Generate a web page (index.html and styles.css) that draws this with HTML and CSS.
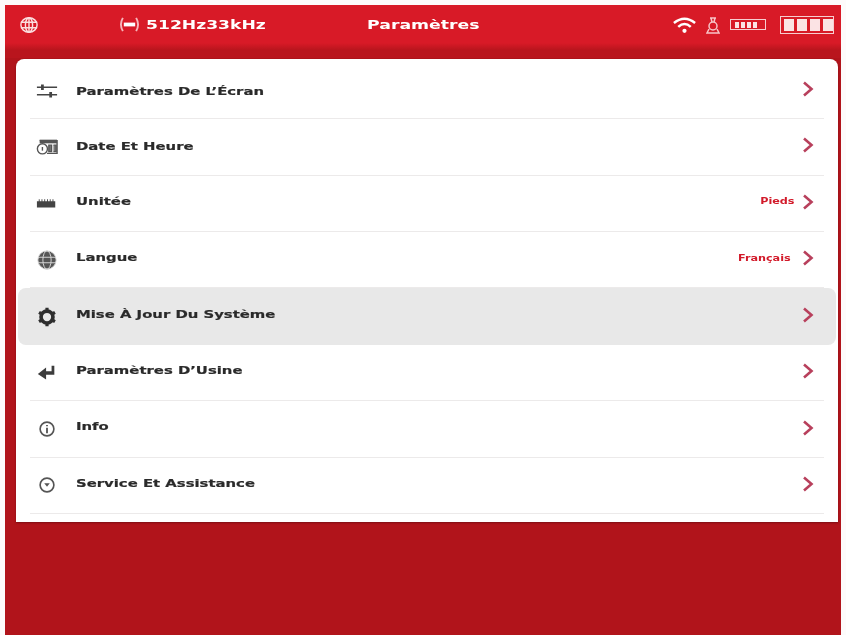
FILE: index.html
```html
<!DOCTYPE html>
<html lang="fr">
<head>
<meta charset="utf-8">
<title>Paramètres</title>
<link rel="stylesheet" href="styles.css">
</head>
<body>
<div class="device">
  <header class="topbar">
    <svg class="ic-globe" viewBox="0 0 20 20" fill="none" stroke="#fbdfe0" stroke-width="1.6"><ellipse cx="10" cy="10" rx="9" ry="8"/><ellipse cx="10" cy="10" rx="4" ry="8"/><path d="M1 7h18M1 13h18M10 2v16"/></svg>
    <svg class="ic-signal" viewBox="0 0 24 20" fill="none" stroke="#f6b6bb" stroke-width="2"><path d="M5 3Q1 10 5 17M19 3Q23 10 19 17"/><rect x="6" y="8" width="12" height="4" fill="#fff" stroke="none"/></svg>
    <span class="freq">512Hz33kHz</span>
    <span class="title">Paramètres</span>
    <div class="status">
      <svg class="ic-wifi" viewBox="0 0 26 18" fill="none" stroke="#fff" stroke-width="2.6"><path d="M2 7Q13 -2 24 7M6.5 11Q13 5 19.5 11"/><circle cx="13" cy="15" r="2.2" fill="#fff" stroke="none"/></svg>
      <svg class="ic-weight" viewBox="0 0 14 18" fill="none" stroke="#f7c4c7" stroke-width="1.5"><path d="M4 2h6M5 2l1 4M9 2L8 6"/><circle cx="7" cy="10" r="4"/><path d="M3 13l-2 4h12l-2-4"/></svg>
      <div class="batt batt-sm"><i></i><i></i><i></i><i></i></div>
      <div class="batt batt-lg"><i></i><i></i><i></i><i></i></div>
    </div>
  </header>
  <main class="card">
    <div class="row r-1">
      <svg class="icon" viewBox="0 0 24 24" fill="none" stroke="#444" stroke-width="1.6"><path d="M1 8h22M1 16h22"/><path d="M7 5v6M16 13v6" stroke-width="3"/></svg>
      <span class="label">Paramètres De L’Écran</span>
      <svg class="chev" viewBox="0 0 12 16"><path d="M2 1.5L9.5 8L2 14.500"/></svg>
    </div>
    <div class="row r-2">
      <svg class="icon" viewBox="0 0 24 24" fill="none" stroke="#555" stroke-width="1.500"><path d="M4 5h19v14H12"/><path d="M4 6h19" stroke-width="4"/><path d="M14 10h3v7h-3zM19 10h3v7h-3" fill="#777"/><circle cx="7" cy="14" r="5.500" fill="#fff"/><path d="M7 12v4"/></svg>
      <span class="label">Date Et Heure</span>
      <svg class="chev" viewBox="0 0 12 16"><path d="M2 1.5L9.5 8L2 14.500"/></svg>
    </div>
    <div class="row">
      <svg class="icon" viewBox="0 0 24 24"><path d="M1 10h2v-2h1v2h2v-2h1v2h2v-2h1v2h2v-2h1v2h2v-2h1v2h2v-2h1v2h2v7H1z" fill="#444"/></svg>
      <span class="label">Unitée</span>
      <span class="value v-pieds">Pieds</span>
      <svg class="chev" viewBox="0 0 12 16"><path d="M2 1.5L9.5 8L2 14.500"/></svg>
    </div>
    <div class="row">
      <svg class="icon" viewBox="0 0 24 24" fill="#555" stroke="#ddd" stroke-width="1"><circle cx="12" cy="12" r="10"/><ellipse cx="12" cy="12" rx="4.500" ry="10" fill="none"/><path d="M2.500 9h19M2.500 15h19" fill="none"/></svg>
      <span class="label">Langue</span>
      <span class="value">Français</span>
      <svg class="chev" viewBox="0 0 12 16"><path d="M2 1.5L9.5 8L2 14.500"/></svg>
    </div>
    <div class="row active">
      <svg class="icon" viewBox="0 0 24 24" fill="none" stroke="#2e2e2e"><circle cx="12" cy="12" r="6.500" stroke-width="4"/><path d="M12 2v4M12 18v4M3.300 7l3.500 2M17.200 15l3.500 2M3.300 17l3.500-2M17.200 9l3.500-2" stroke-width="3.500"/></svg>
      <span class="label">Mise À Jour Du Système</span>
      <svg class="chev" viewBox="0 0 12 16"><path d="M2 1.5L9.5 8L2 14.500"/></svg>
    </div>
    <div class="row">
      <svg class="icon" viewBox="0 0 24 24" fill="#3c3c3c"><path d="M2 13l9-7v4h6V4h3v10H11v5z"/></svg>
      <span class="label">Paramètres D’Usine</span>
      <svg class="chev" viewBox="0 0 12 16"><path d="M2 1.5L9.5 8L2 14.500"/></svg>
    </div>
    <div class="row r-7">
      <svg class="icon" viewBox="0 0 24 24" fill="none" stroke="#555" stroke-width="1.800"><circle cx="12" cy="12" r="7.500"/><path d="M12 10.500v6M12 7.500v1.500" stroke-width="2"/></svg>
      <span class="label">Info</span>
      <svg class="chev" viewBox="0 0 12 16"><path d="M2 1.5L9.5 8L2 14.500"/></svg>
    </div>
    <div class="row">
      <svg class="icon" viewBox="0 0 24 24" fill="none" stroke="#555" stroke-width="1.800"><circle cx="12" cy="12" r="7.500"/><path d="M9 10h6l-3 4z" fill="#555" stroke="none"/></svg>
      <span class="label">Service Et Assistance</span>
      <svg class="chev" viewBox="0 0 12 16"><path d="M2 1.5L9.5 8L2 14.500"/></svg>
    </div>
  </main>
</div>
</body>
</html>
```
FILE: styles.css
```css
html, body { margin: 0; padding: 0; background: #fdfbfb; }
body { width: 846px; height: 635px; overflow: hidden; font-family: "DejaVu Sans", sans-serif; }
.device {
  margin: 5px 5px 0 5px;
  height: 630px;
  background: #b1141b;
  display: flex;
  flex-direction: column;
  filter: blur(0.45px);
}
.topbar {
  height: 53px;
  flex: none;
  padding-left: 14px;
  padding-bottom: 14px;
  box-sizing: border-box;
  display: flex;
  align-items: center;
  background: linear-gradient(#d81a27 0, #d81a27 38px, #b9151d 45px, #b9151d 100%);
  color: #fff;
  font-weight: 700;
}
.ic-globe { width: 20px; height: 18px; flex: none; }
.ic-signal { width: 23px; height: 19px; flex: none; margin-left: 79px; }
.freq {
  font-size: 13px;
  margin-left: 5px;
  width: 221px;
  flex: none;
  white-space: nowrap;
  transform: scaleX(1.32);
  transform-origin: left center;
}
.title {
  font-size: 13px;
  width: 305px;
  flex: none;
  white-space: nowrap;
  transform: scaleX(1.33);
  transform-origin: left center;
}
.status { display: flex; align-items: center; flex: none; }
.ic-wifi { width: 25px; height: 18px; margin-right: 9px; }
.ic-weight { width: 14px; height: 18px; margin-right: 10px; }
.batt { display: flex; border: 1.5px solid #f7cdd0; box-sizing: border-box; align-items: center; }
.batt i { display: block; background: #fbe3e4; flex: none; }
.batt-sm { width: 36px; height: 11px; gap: 2px; padding: 0 4px; margin-right: 14px; }
.batt-sm i { width: 4px; height: 6px; }
.batt-lg { width: 54px; height: 18px; gap: 3px; padding: 0 3px; }
.batt-lg i { width: 10px; height: 12px; }
.card {
  margin: 1px 3px 0 11px;
  height: 463px;
  flex: none;
  box-sizing: border-box;
  padding-top: 4px;
  background: #fff;
  border-radius: 8px 8px 0 0;
  box-shadow: 0 1px 2px rgba(90, 10, 15, 0.6);
}
.row {
  height: 56.3px;
  box-sizing: border-box;
  display: flex;
  align-items: center;
  margin: 0 14px;
  padding: 0 10px;
  border-bottom: 1.5px solid #eceaea;
}
.row.active {
  background: #e8e8e8;
  border-bottom: 0;
  margin: 0 2px;
  padding: 0 22px;
  border-radius: 8px;
  height: 57px;
}
.icon { width: 22px; height: 22px; flex: none; margin-left: -4px; }
.label {
  margin-left: 18px;
  margin-right: auto;
  flex: none;
  font-size: 11px;
  font-weight: 700;
  color: #2a2a2a;
  padding-bottom: 4px;
  white-space: nowrap;
  -webkit-text-stroke: 0.2px #2a2a2a;
  transform: scaleX(1.35);
  transform-origin: left center;
}
.r-1 .label { padding-bottom: 0; padding-top: 2px; }
.r-2 .label { padding-bottom: 0; }
.r-7 .label { padding-bottom: 5px; }
.active .label { padding-bottom: 5px; }
.value {
  font-size: 8px;
  font-weight: 700;
  color: #d21a2a;
  margin-right: 11px;
  padding-bottom: 3px;
  transform: scaleX(1.4);
  transform-origin: right center;
}
.v-pieds { margin-right: 7px; }
.chev { width: 12px; height: 16px; flex: none; padding-bottom: 3px; fill: none; stroke: #b8405c; stroke-width: 2.6; }
```
